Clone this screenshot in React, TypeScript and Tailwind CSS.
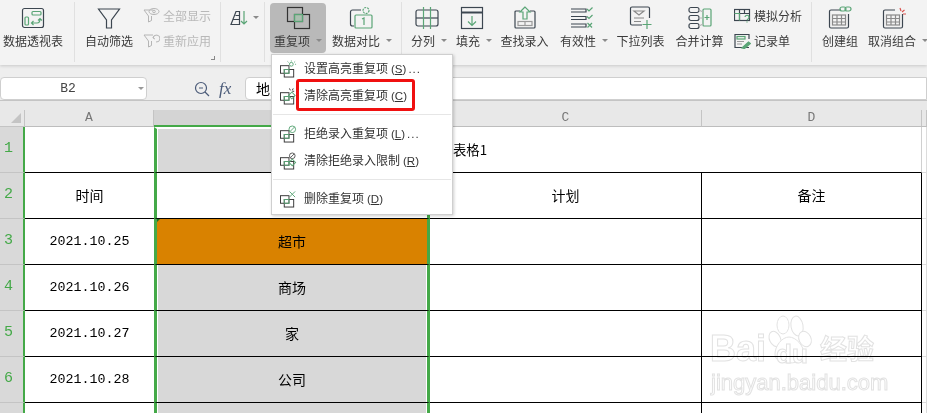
import type { ReactNode } from 'react';

const GREEN = '#5aa576';
const INK = '#3c4650';

const Caret = () => (
  <span className="ml-[6px] mb-[1px] w-0 h-0 border-x-[3px] border-x-transparent border-t-[3px] border-t-[#8a8a8a]" />
);

function RibbonButton({ label, width, icon, caret, className, iconClass }: { label: string; width: number; icon: ReactNode; caret?: boolean; className?: string; iconClass?: string }) {
  return (
    <div className={`flex flex-col items-center shrink-0 pt-[2px] h-[50px] ${className ?? ''}`} style={{ width }}>
      <div className={`h-[26px] flex items-center justify-center ${iconClass ?? ''}`}>{icon}</div>
      <div className="flex items-center mt-[2px] text-[12px] leading-[16px] text-[#3a3a3a] whitespace-nowrap">
        {label}
        {caret && <Caret />}
      </div>
    </div>
  );
}

const Sep = ({ className }: { className?: string }) => <div className={`w-px h-[60px] -mt-[1px] bg-[#e0e0e0] shrink-0 ${className ?? ''}`} />;

const Icon = ({ children, w = 24, h = 24 }: { children: ReactNode; w?: number; h?: number }) => (
  <svg width={w} height={h} viewBox={`0 0 ${w} ${h}`} fill="none" stroke={INK} strokeWidth="1.2">
    {children}
  </svg>
);

const PivotIcon = () => (
  <Icon>
    <rect x="1.5" y="2.5" width="21" height="19" rx="2" />
    <rect x="11" y="5.5" width="9" height="3.5" rx="1" stroke={GREEN} />
    <rect x="4" y="11" width="3.5" height="8" rx="1" stroke={GREEN} />
    <path d="M11 17h5c2 0 3-1 3-4M17 14.5l2-2 2 2M12.5 15l-2 2 2 2" stroke={GREEN} />
  </Icon>
);
const FunnelIcon = () => (
  <Icon>
    <path d="M1.5 3h21l-8 11v8h-5v-8z" />
  </Icon>
);
const SmallFunnel = ({ glyph }: { glyph: 'eye' | 'redo' }) => (
  <svg width="17" height="16" viewBox="0 0 17 16" fill="none" stroke="#b5b5b5" strokeWidth="1">
    <path d="M1 2h9M1 2l4.500 6v6l3-1.500V8" />
    {glyph === 'eye' ? (
      <>
        <ellipse cx="11" cy="3.500" rx="5" ry="3" />
        <circle cx="11" cy="3.500" r="1.300" />
      </>
    ) : (
      <path d="M10 5a3.500 3.500 0 1 1 3 4M11 3l-1 2 2 1" />
    )}
  </svg>
);
const SortIcon = () => (
  <Icon w={24} h={16}>
    <path d="M1 14.500L6 1.500h3.500v13zM3.500 9.500h6M5.500 5.500h4" />
    <path d="M14 1v13M11 11l3 3 3-3" stroke={GREEN} />
  </Icon>
);
const DupIcon = () => (
  <svg width="25" height="24" viewBox="0 0 25 24" fill="none" stroke="#333" strokeWidth="1.200">
    <rect x="1.500" y="1.500" width="15" height="14" />
    <rect x="8.500" y="8.500" width="15" height="14" />
    <rect x="8.500" y="8.500" width="8" height="7" stroke={GREEN} fill="#9cc7a8" fillOpacity="0.5" />
  </svg>
);
const CompareIcon = () => (
  <Icon>
    <path d="M12 4H3.500a2 2 0 0 0-2 2v12a2 2 0 0 0 2 2H5" />
    <rect x="6" y="9" width="17" height="13" rx="1" stroke={GREEN} />
    <circle cx="17" cy="4.500" r="3" stroke={GREEN} strokeDasharray="2 1" />
    <path d="M13 13l2-1v7" stroke={GREEN} />
  </Icon>
);
const SplitIcon = () => (
  <Icon>
    <rect x="1" y="4" width="22" height="16" rx="2" />
    <path d="M1 12h22" />
    <path d="M8.500 1v22M15.500 1v22" stroke={GREEN} />
  </Icon>
);
const FillIcon = () => (
  <Icon>
    <rect x="1.500" y="1.500" width="21" height="21" />
    <path d="M1.500 6.500h21" strokeWidth="2" />
    <path d="M12 10v9M8 15.500l4 4 4-4" stroke={GREEN} />
  </Icon>
);
const LookupIcon = () => (
  <Icon>
    <path d="M7 5H3a1 1 0 0 0-1 1v15a1 1 0 0 0 1 1h18a1 1 0 0 0 1-1V6a1 1 0 0 0-1-1h-4" />
    <path d="M12 1l-5 5h3v7h4V6h3z" stroke={GREEN} />
    <rect x="5" y="15.500" width="14" height="4" stroke="#9a9a9a" />
    <path d="M12 15.500v4" stroke="#9a9a9a" />
  </Icon>
);
const ValidIcon = () => (
  <Icon>
    <path d="M1 3h15v3H1M1 10.500h15v3H1M1 18h15v3H1" />
    <path d="M17 3l2 2 3.500-3.500M17 10.500l2 2 3.500-3.500" stroke={GREEN} />
    <path d="M17.500 17l4.500 4.500M22 17l-4.500 4.500" stroke={GREEN} />
  </Icon>
);
const DropIcon = () => (
  <Icon>
    <path d="M13 19H3a1.500 1.500 0 0 1-1.500-1.500v-15A1.500 1.500 0 0 1 3 1h16a1.500 1.500 0 0 1 1.500 1.500V12" />
    <path d="M5 5h10l-5 4z" stroke="#8a8a8a" />
    <path d="M5 12h10M5 15.500h7" stroke="#8a8a8a" />
    <path d="M18 14v9M13.500 18.500h9" stroke={GREEN} />
  </Icon>
);
const MergeIcon = () => (
  <Icon>
    <rect x="1" y="1.500" width="10" height="5" rx="2" />
    <rect x="1" y="9.500" width="10" height="5" rx="2" />
    <rect x="1" y="17.500" width="10" height="5" rx="2" />
    <rect x="15" y="3" width="8" height="17" rx="1" stroke={GREEN} />
    <path d="M19 9v5M16.500 11.500h5" stroke={GREEN} />
    <path d="M11 4l4 2M11 12h4M11 20l4-2" stroke="#b5b5b5" />
  </Icon>
);
const WhatIfIcon = () => (
  <Icon w={17} h={15}>
    <rect x="0.500" y="1.500" width="15" height="11" />
    <path d="M0.500 5.500h15M5.500 1.500v11M10.500 1.500v4" />
    <path d="M0.500 5.500h5v7" stroke={GREEN} />
    <path d="M11 9a2 2 0 1 1 3 2l-1 1M13 13.500v1" stroke={GREEN} />
  </Icon>
);
const RecordIcon = () => (
  <Icon w={17} h={16}>
    <path d="M15 6V1.500H1v13h14" />
    <rect x="3" y="3.500" width="8" height="2.500" stroke={GREEN} />
    <path d="M3 8.500h7M3 11h5" stroke="#9a9a9a" />
    <path d="M8 15l6.500-6 2 1.500-6 5z" fill={GREEN} stroke={GREEN} />
  </Icon>
);
const GroupIcon = ({ broken }: { broken?: boolean }) => (
  <Icon>
    <path d="M13 4H3a1.500 1.500 0 0 0-1.500 1.500v15A1.500 1.500 0 0 0 3 22h16a1.500 1.500 0 0 0 1.500-1.500V8" />
    <g stroke="#8a8a8a">
      <rect x="4.500" y="9" width="13" height="10" />
      <path d="M4.500 12.500h13M4.500 16h13M9 9v10M13.500 9v10" />
    </g>
    {broken ? (
      <path d="M18 2l1 3M22.500 4l-2.500 2M24 8h-3" stroke="#d9534f" />
    ) : (
      <g stroke={GREEN}>
        <rect x="12" y="1" width="6" height="4" rx="2" />
        <rect x="17" y="1" width="6" height="4" rx="2" />
      </g>
    )}
  </Icon>
);

function SmallRow({ icon, label, muted }: { icon: ReactNode; label: string; muted?: boolean }) {
  return (
    <div className={`flex items-center h-[25px] text-[12px] whitespace-nowrap ${muted ? 'text-[#b8b8b8]' : 'text-[#3a3a3a]'}`}>
      <div className="w-[20px] flex items-center">{icon}</div>
      {label}
    </div>
  );
}

function Ribbon() {
  return (
    <div className="relative z-10 flex h-[65px] bg-[#f3f3f3] shadow-[0_1px_3px_rgba(0,0,0,0.16)] pt-[3px]">
      <RibbonButton label="数据透视表" width={66} icon={<PivotIcon />} />
      <Sep className="ml-[8px]" />
      <RibbonButton label="自动筛选" width={68} icon={<FunnelIcon />} />
      <div className="relative w-[70px] shrink-0">
        <SmallRow muted icon={<SmallFunnel glyph="eye" />} label="全部显示" />
        <SmallRow muted icon={<SmallFunnel glyph="redo" />} label="重新应用" />
        <span className="absolute left-[68px] top-[53px] w-[4px] h-[4px] border-r border-b border-[#888]" />
      </div>
      <Sep className="ml-[7px]" />
      <div className="w-[43px] shrink-0 pl-[9px] pt-[7px] flex">
        <SortIcon />
        <span className="mt-[6px] -ml-[1px] w-0 h-0 border-x-[3px] border-x-transparent border-t-[3px] border-t-[#8a8a8a]" />
      </div>
      <Sep />
      <RibbonButton label="重复项" width={56} caret className="ml-[5px] bg-[#b9b9b9] rounded-[4px]" icon={<DupIcon />} />
      <RibbonButton label="数据对比" width={72} caret iconClass="-ml-[3px]" icon={<CompareIcon />} />
      <Sep className="ml-[3px]" />
      <RibbonButton label="分列" width={54} caret iconClass="-ml-[4px]" icon={<SplitIcon />} />
      <RibbonButton label="填充" width={36} caret iconClass="-ml-[5px]" icon={<FillIcon />} />
      <RibbonButton label="查找录入" width={65} icon={<LookupIcon />} />
      <RibbonButton label="有效性" width={54} caret iconClass="-ml-[4px]" icon={<ValidIcon />} />
      <RibbonButton label="下拉列表" width={59} icon={<DropIcon />} />
      <RibbonButton label="合并计算" width={59} icon={<MergeIcon />} />
      <div className="w-[82px] shrink-0 pl-[5px]">
        <SmallRow icon={<WhatIfIcon />} label="模拟分析" />
        <SmallRow icon={<RecordIcon />} label="记录单" />
      </div>
      <Sep />
      <RibbonButton label="创建组" width={56} icon={<GroupIcon />} />
      <RibbonButton label="取消组合" width={60} caret iconClass="-ml-[8px]" icon={<GroupIcon broken />} />
    </div>
  );
}

function FormulaBar() {
  return (
    <div className="flex h-[36px] pt-[12px] bg-[#eeeeee] border-b border-[#c4c4c4] items-stretch">
      <div className="relative w-[147px] h-[23px] pr-[11px] bg-white border border-[#cfcfcf] rounded-[4px] flex items-center justify-center font-['Liberation_Mono',monospace] text-[13px] text-[#444]">
        B2
        <span className="absolute right-[2px] top-[9px] w-0 h-0 border-x-[3px] border-x-transparent border-t-[3px] border-t-[#999]" />
      </div>
      <div className="w-[98px] flex items-center pl-[47px] gap-[9px] h-[23px]">
        <svg width="16" height="16" viewBox="0 0 16 16" fill="none" stroke="#4a5a78" strokeWidth="1.200">
          <circle cx="7" cy="7" r="5.500" />
          <path d="M5 7h4M11 11l4 4" />
        </svg>
        <span className="font-['Liberation_Serif',serif] italic text-[17px] text-[#4a5a78]">fx</span>
      </div>
      <div className="flex-1 h-[23px] bg-white border border-[#cfcfcf] rounded-l-[4px] pl-[10px] text-[14px] leading-[21px] text-black">地点</div>
    </div>
  );
}

const ROWS = [
  { n: '1', a: '', b: '', title: true },
  { n: '2', a: '时间', b: '地点', c: '计划', d: '备注', active: true },
  { n: '3', a: '2021.10.25', b: '超市', hit: true },
  { n: '4', a: '2021.10.26', b: '商场' },
  { n: '5', a: '2021.10.27', b: '家' },
  { n: '6', a: '2021.10.28', b: '公司' },
  { n: '', a: '', b: '' },
];

function ColHead({ children, className }: { children?: ReactNode; className?: string }) {
  return (
    <div className={`flex items-center justify-center border-b border-[#bdbdbd] font-['Liberation_Mono',monospace] text-[13px] text-[#777] ${className ?? 'bg-[#e8e8e8] border-r border-r-[#c4c4c4]'}`}>
      {children}
    </div>
  );
}

function Sheet() {
  return (
    <div className="grid grid-cols-[25px_129px_276px_272px_220px_1fr] [grid-template-rows:17px] auto-rows-[46px] overflow-hidden h-[303px] bg-white text-[14px] text-black">
      <div className="relative bg-[#e8e8e8] border-r border-b border-[#c4c4c4]">
        <span className="absolute right-[3px] bottom-[3px] w-0 h-0 border-l-[10px] border-l-transparent border-b-[10px] border-b-[#c4c4c4]" />
      </div>
      <ColHead>A</ColHead>
      <ColHead className="bg-[#d4d4d4] border-b-[2px] border-b-[#44a948]" />
      <ColHead>C</ColHead>
      <ColHead>D</ColHead>
      <ColHead />
      {ROWS.map((r, i) => (
        <div key={i} className="contents">
          <div className="flex items-center pl-[4px] bg-[#d9d9d9] border-b border-[#c4c4c4] font-['Liberation_Mono',monospace] text-[15px] text-[#44a948] border-r-[2px] border-r-[#44a948]">
            {r.n}
          </div>
          <div className={`flex items-center justify-center border-b border-b-black ${r.a.startsWith('2') ? "font-['Liberation_Mono',monospace] text-[13.333px]" : ''}`}>
            {r.a}
          </div>
          <div
            className={`relative flex items-center justify-center border-x-[3px] border-x-[#44a948] border-b border-b-black ${
              r.hit
                ? 'bg-[#d98200]'
                : r.active
                  ? 'bg-white'
                  : 'bg-[#d8d8d8] shadow-[inset_1px_0_0_#fff,inset_-1px_0_0_#fff]'
            } ${r.title ? 'border-t-[2px] border-t-white' : ''}`}
          >
            {r.b}
            {r.hit && <span className="absolute left-0 top-0 w-0 h-0 border-r-[3px] border-r-transparent border-t-[3px] border-t-[#1f6b22]" />}
          </div>
          <div className={`flex items-center justify-center border-b border-black ${r.title ? '' : 'border-r'}`}>
            {r.title ? <span className="w-full pl-[23px] text-[13.333px]">表格1</span> : r.c}
          </div>
          <div className={`flex items-center justify-center border-b border-black border-r ${r.title ? 'border-r-[#d0d0d0]' : ''}`}>{r.d}</div>
          <div className="border-b border-r border-[#dcdcdc]" />
        </div>
      ))}
    </div>
  );
}

const MenuItem = ({ icon, label, hot, dots }: { icon: ReactNode; label: string; hot: string; dots?: boolean }) => (
  <div className="flex items-center h-[27px] pl-[8px] gap-[7px] text-[12px] text-[#333] whitespace-nowrap">
    <div className="w-[17px] h-[17px] flex items-center justify-center">{icon}</div>
    <span>
      {label}
      <span className="ml-[3px] font-['Liberation_Sans',sans-serif] text-[11.5px]">
        (<span className="underline">{hot}</span>){dots && <span className="ml-[2px] tracking-[1px]">...</span>}
      </span>
    </span>
  </div>
);

const MenuGlyph = ({ children }: { children?: ReactNode }) => (
  <svg width="18" height="18" viewBox="0 0 18 18" fill="none" stroke="#333" strokeWidth="1">
    <rect x="0.500" y="5.500" width="9" height="8" />
    <rect x="4.500" y="9.500" width="10" height="8" />
    <rect x="4.500" y="9.500" width="5" height="4" stroke={GREEN} />
    {children}
  </svg>
);

function DuplicateMenu() {
  return (
    <div className="absolute left-[271px] top-[54px] w-[182px] h-[161px] bg-white border border-[#cfcfcf] shadow-[1px_1px_3px_rgba(0,0,0,0.2)] z-20">
      <MenuItem
        label="设置高亮重复项"
        hot="S"
        dots
        icon={
          <MenuGlyph>
            <circle cx="12" cy="4" r="2" stroke={GREEN} />
            <path d="M12 0v1M16 1l-1 1M17 4h-1M8 1l1 1" stroke={GREEN} />
          </MenuGlyph>
        }
      />
      <MenuItem
        label="清除高亮重复项"
        hot="C"
        icon={
          <MenuGlyph>
            <path d="M10 1l1 2M14 1l-1 2M15 4h-2" stroke="#333" />
            <rect x="10" y="6" width="5" height="5" transform="rotate(45 12.500 8.500)" stroke={GREEN} />
          </MenuGlyph>
        }
      />
      <div className="h-px bg-[#e6e6e6] mx-[1px] my-[5px]" />
      <MenuItem
        label="拒绝录入重复项"
        hot="L"
        dots
        icon={
          <MenuGlyph>
            <circle cx="13" cy="4" r="3.500" stroke={GREEN} />
            <path d="M10.500 6.500l5-5" stroke={GREEN} />
          </MenuGlyph>
        }
      />
      <MenuItem
        label="清除拒绝录入限制"
        hot="R"
        icon={
          <MenuGlyph>
            <circle cx="13" cy="3.500" r="3" stroke="#555" />
            <path d="M11 5.500l4-4" stroke="#555" />
            <rect x="10.500" y="8" width="5" height="5" transform="rotate(45 13 10.500)" stroke={GREEN} />
          </MenuGlyph>
        }
      />
      <div className="h-px bg-[#e6e6e6] mx-[1px] my-[5px]" />
      <MenuItem
        label="删除重复项"
        hot="D"
        icon={
          <MenuGlyph>
            <path d="M10 1l6 6M16 1l-6 6" stroke={GREEN} />
          </MenuGlyph>
        }
      />
    </div>
  );
}

function Watermark() {
  return (
    <div className="absolute left-[710px] top-[312px] w-[180px] h-[84px] z-10 pointer-events-none mix-blend-multiply font-['Liberation_Sans',sans-serif]">
      <svg className="absolute left-[58px] top-0" width="50" height="55" viewBox="0 0 50 55" fill="#ffffff" stroke="#e2e2e2" strokeWidth="1">
        <ellipse cx="15" cy="13" rx="6" ry="9" />
        <ellipse cx="29" cy="14" rx="6" ry="10" transform="rotate(-10 29 14)" />
        <ellipse cx="7" cy="27" rx="5.500" ry="8" transform="rotate(-25 7 27)" />
        <ellipse cx="37" cy="27" rx="6" ry="8" transform="rotate(-25 37 27)" />
        <path d="M21 25c-7 0-14 9-14 17 0 6 5 9 14 9s15-3 15-9c0-8-8-17-15-17z" />
      </svg>
      <span className="absolute left-0 top-[17px] text-[36px] leading-[40px] font-bold text-white [-webkit-text-stroke:1px_#e2e2e2]">Bai</span>
      <span className="absolute left-[66px] top-[27px] text-[26px] leading-[30px] font-bold text-white [-webkit-text-stroke:1px_#e2e2e2]">du</span>
      <span className="absolute left-[110px] top-[20px] text-[27px] leading-[32px] font-bold text-white font-['Noto_Sans_CJK_SC',sans-serif] [-webkit-text-stroke:1px_#e2e2e2]">经验</span>
      <span className="absolute left-[1px] top-[58px] text-[22px] leading-[26px] text-white [-webkit-text-stroke:1px_#e2e2e2] whitespace-nowrap">jingyan.baidu.com</span>
    </div>
  );
}

export default function App() {
  return (
    <div className="relative w-[927px] h-[413px] overflow-hidden bg-white font-['Noto_Sans_CJK_SC','Liberation_Sans',sans-serif]">
      <Ribbon />
      <FormulaBar />
      <div className="h-[9px] bg-[#e8e8e8]" />
      <Sheet />
      <DuplicateMenu />
      <div className="absolute left-[296px] top-[79px] w-[119px] h-[32px] border-[3px] border-[#f01010] rounded-[3px] z-30" />
      <Watermark />
    </div>
  );
}
